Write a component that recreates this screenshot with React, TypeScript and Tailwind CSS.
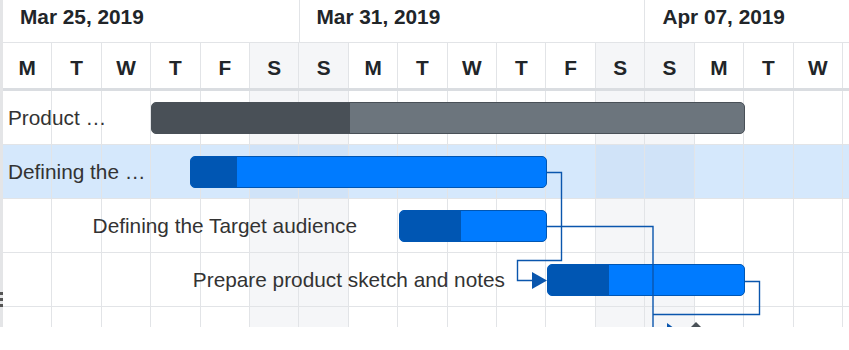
import React from "react";

type Task = {
  label: string;
  start: number; // page x of bar start
  end: number;
  progress: number; // page x where progress ends
  kind: "project" | "task";
  selected?: boolean;
  clipped?: boolean;
};

const days = ["M", "T", "W", "T", "F", "S", "S", "M", "T", "W", "T", "F", "S", "S", "M", "T", "W", ""];
const weekend = [5, 6, 12, 13];

const tasks: Task[] = [
  { label: "Product …", start: 151, end: 745, progress: 349, kind: "project", clipped: true },
  { label: "Defining the …", start: 190, end: 547, progress: 236, kind: "task", selected: true, clipped: true },
  { label: "Defining the Target audience", start: 399, end: 547, progress: 460, kind: "task" },
  { label: "Prepare product sketch and notes", start: 547, end: 745, progress: 608, kind: "task" },
];

function Cells({ selected }: { selected?: boolean }) {
  return (
    <div className="grid h-full grid-cols-[repeat(18,49.41px)]">
      {days.map((_, i) => {
        const we = weekend.includes(i);
        let bg = "bg-white";
        if (selected) bg = we ? "bg-[#d0e3f8]" : "bg-[#d5e8fc]";
        else if (we) bg = "bg-[#f5f6f8]";
        return <div key={i} className={`h-full border-r border-[#e2e4e7] ${bg}`} />;
      })}
    </div>
  );
}

function TaskRow({ task }: { task?: Task }) {
  const labelW = task ? task.start - 3 - 42 : 0;
  const isProject = task?.kind === "project";
  return (
    <div className="relative h-[54px] border-b border-[#e2e4e7]">
      <Cells selected={task?.selected} />
      {task && (
        <div className="absolute inset-0 flex items-start">
          <div
            className={`mt-[15px] truncate whitespace-nowrap pl-[5px] text-[20.8px] leading-[24px] text-[#333] ${
              task.clipped ? "text-left" : "text-right"
            }`}
            style={{ width: labelW }}
          >
            {task.label}
          </div>
          <div
            className={`ml-[42px] mt-[11px] flex h-[32px] overflow-hidden rounded-[5px] border ${
              isProject ? "border-[#495057] bg-[#6c757d]" : "border-[#0056b3] bg-[#007bff]"
            }`}
            style={{ width: task.end - task.start }}
          >
            <div
              className={isProject ? "h-full bg-[#495057]" : "h-full bg-[#0056b3]"}
              style={{ width: task.progress - task.start }}
            />
          </div>
        </div>
      )}
    </div>
  );
}

export default function App() {
  return (
    <div className="relative flex h-[327px] w-[849px] overflow-hidden bg-white font-['Liberation_Sans',Arial,sans-serif] text-[#212529]">
      {/* splitter */}
      <div className="flex w-[3px] shrink-0 flex-col gap-[3px] bg-[#e4e5e7] pt-[292px]">
        <span className="h-[3px] w-[3px] bg-[#555]" />
        <span className="h-[3px] w-[3px] bg-[#555]" />
        <span className="h-[3px] w-[3px] bg-[#555]" />
      </div>

      <div className="min-w-0 flex-1">
        {/* month header */}
        <div className="flex h-[43px] border-b border-[#e2e4e7] text-[20.8px] font-bold leading-[24px]">
          <div className="w-[296.5px] shrink-0 border-r border-[#e2e4e7] pl-[17px] pt-[5px]">Mar 25, 2019</div>
          <div className="w-[345.9px] shrink-0 border-r border-[#e2e4e7] pl-[17px] pt-[5px]">Mar 31, 2019</div>
          <div className="flex-1 whitespace-nowrap pl-[17px] pt-[5px]">Apr 07, 2019</div>
        </div>

        {/* day header */}
        <div className="grid h-[48px] grid-cols-[repeat(18,49.41px)] border-b-[3px] border-[#dadde1] text-[20.8px] font-bold leading-[24px]">
          {days.map((d, i) => (
            <div
              key={i}
              className={`flex justify-center border-r border-[#e2e4e7] pt-[13px] ${
                weekend.includes(i) ? "bg-[#f5f6f8]" : "bg-white"
              }`}
            >
              {d}
            </div>
          ))}
        </div>

        {tasks.map((t, i) => (
          <TaskRow key={i} task={t} />
        ))}
        <TaskRow />
      </div>

      {/* dependency connectors */}
      <svg className="pointer-events-none absolute left-0 top-0" width="849" height="350" viewBox="0 0 849 350">
        <g fill="none" stroke="#0a56ad" strokeWidth="1.4">
          <path d="M547 172.5 H561.5 V260.5 H517.5 V280.5 H533" />
          <path d="M547 226.5 H653 V350" />
          <path d="M745 281.5 H759.5 V314.5 H653" />
        </g>
        <polygon points="532,272 547,280.5 532,289" fill="#0a56ad" />
        <polygon points="667,323 682,334 667,345" fill="#0a56ad" />
        <polygon points="696,322 708,334 696,346 684,334" fill="#495057" />
      </svg>
    </div>
  );
}
